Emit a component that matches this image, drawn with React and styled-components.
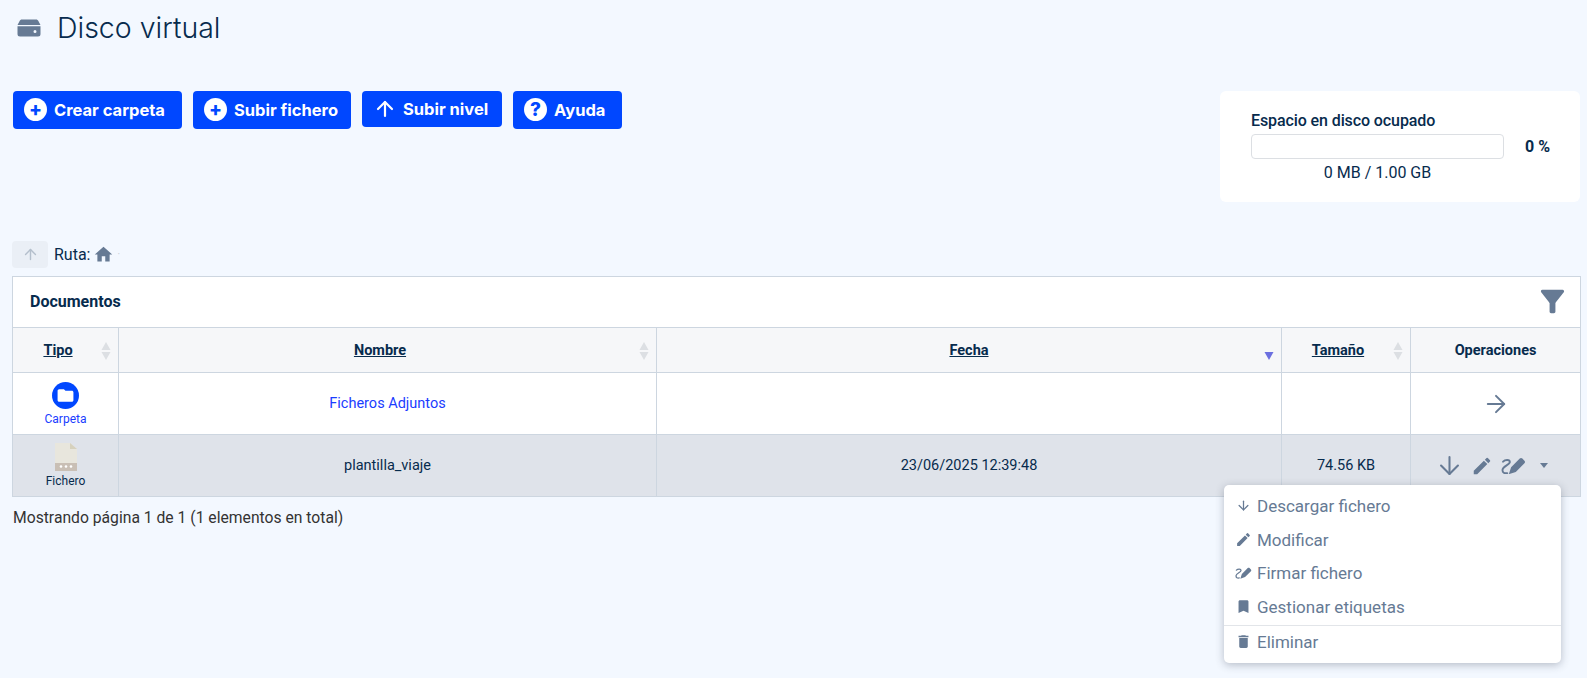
import React from 'react';
import styled, { createGlobalStyle } from 'styled-components';
import { ArrowUp, ArrowDown, ArrowRight } from 'lucide-react';
import { MdEdit, MdHome, MdBookmark, MdDelete, MdFolder, MdFilterAlt } from 'react-icons/md';

const palette = {
  bg: '#f3f8ff',
  blue: '#0047ff',
  ink: '#072b4d',
  grey: '#667a94',
  line: '#cdd6e0',
  selected: '#dfe3ea',
  head: '#f6f7f9',
};

const GlobalStyle = createGlobalStyle`
  html, body {
    margin: 0;
    padding: 0;
    background: ${palette.bg};
    font-family: Roboto, "Liberation Sans", sans-serif;
    color: ${palette.ink};
  }
  * { box-sizing: border-box; }
`;

const Page = styled.div`
  width: 1587px;
  height: 678px;
  padding: 0 7px 0 12px;
  overflow: hidden;
`;

const Header = styled.header`
  display: flex;
  align-items: center;
  height: 91px;
  padding: 0 0 36px 5px;
  gap: 16px;
`;

const Title = styled.h1`
  margin: 0;
  font-family: Inter, sans-serif;
  font-size: 28.5px;
  font-weight: 300;
  color: ${palette.ink};
`;

const TopRow = styled.div`
  display: flex;
  justify-content: space-between;
  align-items: flex-start;
`;

const Buttons = styled.div`
  display: flex;
  align-items: flex-start;
  gap: 11px;
  padding-left: 1px;
`;

const ActionBtn = styled.button`
  display: flex;
  align-items: center;
  gap: ${({ $gap }) => $gap || 7}px;
  width: ${({ $w }) => $w}px;
  height: ${({ $h }) => $h || 38}px;
  padding: 0 0 1px 11px;
  border: 0;
  border-radius: 4px;
  background: ${palette.blue};
  color: #fff;
  font-family: Inter, sans-serif;
  font-size: 16.5px;
  font-weight: 700;
`;

const BtnCircle = styled.span`
  display: flex;
  align-items: center;
  justify-content: center;
  width: 23px;
  height: 23px;
  border-radius: 50%;
  background: #fff;
  color: ${palette.blue};
  font-size: 19px;
  font-weight: 800;
  line-height: 1;
`;

const DiskCard = styled.div`
  width: 360px;
  height: 111px;
  padding: 18px 0 0 31px;
  background: #fff;
  border-radius: 6px;
`;

const DiskTitle = styled.div`
  font-size: 16px;
  font-weight: 500;
  line-height: 24px;
  letter-spacing: -0.1px;
`;

const DiskBarRow = styled.div`
  display: flex;
  align-items: center;
  gap: 21px;
  margin-top: 1px;
`;

const DiskBar = styled.div`
  width: 253px;
  height: 25px;
  border: 1px solid #dcdfe3;
  border-radius: 4px;
`;

const DiskPct = styled.span`
  font-size: 16px;
  font-weight: 700;
`;

const DiskInfo = styled.div`
  width: 253px;
  margin-top: 2px;
  text-align: center;
  font-size: 16px;
  line-height: 24px;
`;

const PathRow = styled.div`
  display: flex;
  align-items: center;
  height: 27px;
  margin-top: 39px;
  font-size: 16px;
`;

const BackBtn = styled.button`
  display: flex;
  align-items: center;
  justify-content: center;
  width: 36px;
  height: 27px;
  margin-right: 6px;
  border: 0;
  border-radius: 4px;
  background: #eaeff6;
  color: #b4bfcc;
`;

const HomeIcon = styled(MdHome)`
  margin-left: 2px;
  color: ${palette.grey};
  font-size: 21px;
`;

const PathDot = styled.span`
  margin-left: 4px;
  color: #c5ccd6;
  font-size: 10px;
`;

const TableWrap = styled.div`
  position: relative;
  margin-top: 8px;
`;

const Table = styled.table`
  width: 1568px;
  table-layout: fixed;
  border-collapse: collapse;
  font-size: 14.5px;
`;

const CaptionRow = styled.tr`
  height: 51px;
  background: #fff;
`;

const CaptionCell = styled.td`
  border: 1px solid ${palette.line};
  padding: 0 17px;
`;

const CaptionInner = styled.div`
  display: flex;
  align-items: center;
  justify-content: space-between;
  padding-bottom: 1px;
  font-size: 16px;
  font-weight: 700;
`;

const FilterIcon = styled(MdFilterAlt)`
  margin-right: -7px;
  color: ${palette.grey};
  font-size: 35px;
`;

const Th = styled.th`
  position: relative;
  height: 45px;
  padding: 0 ${({ $shift }) => $shift || 0}px 0 0;
  border: 1px solid ${palette.line};
  background: ${palette.head};
  font-size: 14.5px;
  font-weight: 700;
  text-align: center;
  text-decoration: ${({ $plain }) => ($plain ? 'none' : 'underline')};
`;

const SortIcon = styled.svg`
  position: absolute;
  top: 14px;
  right: 7px;
  width: 10px;
  height: 18px;
`;

const Row = styled.tr`
  height: ${({ $h }) => $h}px;
  background: ${({ $selected }) => ($selected ? palette.selected : '#fff')};
`;

const Td = styled.td`
  padding: 0;
  border: 1px solid ${palette.line};
  text-align: center;
  color: ${({ $link }) => ($link ? '#1a3dff' : palette.ink)};
`;

const TypeCell = styled.div`
  display: flex;
  flex-direction: column;
  align-items: center;
  gap: 3px;
  font-size: 12px;
  color: ${({ $link }) => ($link ? '#1a3dff' : palette.ink)};
`;

const FolderBadge = styled.span`
  display: flex;
  align-items: center;
  justify-content: center;
  width: 27px;
  height: 27px;
  border-radius: 50%;
  background: ${palette.blue};
  color: #fff;
  font-size: 19px;
`;

const RowActions = styled.div`
  display: flex;
  align-items: center;
  justify-content: center;
  gap: 7px;
  padding-right: ${({ $shift }) => $shift || 0}px;
  color: ${palette.grey};
`;

const SignSlot = styled.span`
  display: flex;
  margin-left: 1px;
`;

const Caret = styled.span`
  width: 0;
  height: 0;
  margin-left: 7px;
  border-left: 4.5px solid transparent;
  border-right: 4.5px solid transparent;
  border-top: 5px solid ${palette.grey};
`;

const Footer = styled.div`
  margin-top: 11px;
  padding-left: 1px;
  font-size: 15.7px;
  line-height: 20px;
  color: #333;
`;

const Menu = styled.div`
  position: absolute;
  top: 100%;
  right: 19px;
  width: 337px;
  height: 178px;
  margin-top: -12px;
  padding-top: 4px;
  background: #fff;
  border-radius: 5px;
  box-shadow: 0 2px 8px rgba(40, 50, 70, 0.3);
`;

const MenuItem = styled.div`
  display: flex;
  align-items: center;
  gap: 3px;
  height: ${({ $h }) => $h || 33.7}px;
  margin-top: ${({ $divided }) => ($divided ? 1 : 0)}px;
  padding-left: 8px;
  font-size: 17px;
  color: ${palette.grey};
  border-top: ${({ $divided }) => ($divided ? '1px solid #e2e5e9' : '0')};
`;

const MenuIconBox = styled.span`
  display: flex;
  align-items: center;
  justify-content: center;
  width: 22px;
`;

function DiskIcon() {
  return (
    <svg width="24" height="20" viewBox="0 0 24 20" fill={palette.grey}>
      <path d="M5 1.500h14c1.200 0 2 .7 2.500 1.700L23.500 7H.5l2-3.800C3 2.200 3.800 1.500 5 1.500z" />
      <path fillRule="evenodd" d="M.5 8.300h23V16a2.500 2.500 0 0 1-2.500 2.500H3A2.500 2.500 0 0 1 .5 16V8.300zm17.500 3.700a1.500 1.500 0 1 0 0 3 1.500 1.500 0 0 0 0-3z" />
    </svg>
  );
}

function SignIcon({ size = 25 }) {
  return (
    <svg width={size} height={(size * 17) / 24} viewBox="0 0 24 17" fill="none">
      <path d="M7.500 16.500 9.700 9.800 18 1.500c.7-.7 1.800-.7 2.500 0l2 2c.7.7.7 1.800 0 2.500L14.200 14.300z" fill={palette.grey} />
      <path d="M2 4.500C4 2.300 8.500 2.300 8.500 4.800S2 8.800 1.500 12s2 4 4.500 3.500" stroke={palette.grey} strokeWidth="1.800" strokeLinecap="round" />
    </svg>
  );
}

function FileIcon() {
  return (
    <svg width="22" height="28" viewBox="0 0 22 28">
      <path d="M0 0h15l7 6v22H0z" fill="#e8e6dd" />
      <path d="M15 0l7 6h-7z" fill="#d6d1bd" />
      <path d="M0 20h22v8H0z" fill="#c9bfb5" />
      <circle cx="6" cy="23.500" r="1.300" fill="#fff" />
      <circle cx="11" cy="23.500" r="1.300" fill="#fff" />
      <circle cx="16" cy="23.500" r="1.300" fill="#fff" />
    </svg>
  );
}

function SortArrows({ active }) {
  return (
    <SortIcon viewBox="0 0 10 18">
      <path d="M5 0l4.500 8h-9z" fill={active ? 'transparent' : '#dcdfe3'} />
      <path d="M5 18l4.500-8h-9z" fill={active ? '#6b6fe0' : '#dcdfe3'} />
    </SortIcon>
  );
}

const menuItems = [
  { label: 'Descargar fichero', icon: <ArrowDown size={15} /> },
  { label: 'Modificar', icon: <MdEdit size={17} /> },
  { label: 'Firmar fichero', icon: <SignIcon size={17} /> },
  { label: 'Gestionar etiquetas', icon: <MdBookmark size={17} /> },
];

function App() {
  return (
    <Page>
      <GlobalStyle />
      <Header>
        <DiskIcon />
        <Title>Disco virtual</Title>
      </Header>

      <TopRow>
        <Buttons>
          <ActionBtn $w={169}>
            <BtnCircle>+</BtnCircle>
            Crear carpeta
          </ActionBtn>
          <ActionBtn $w={158}>
            <BtnCircle>+</BtnCircle>
            Subir fichero
          </ActionBtn>
          <ActionBtn $w={140} $h={36} $gap={6}>
            <ArrowUp size={24} strokeWidth={2.2} />
            Subir nivel
          </ActionBtn>
          <ActionBtn $w={109}>
            <BtnCircle>?</BtnCircle>
            Ayuda
          </ActionBtn>
        </Buttons>
        <DiskCard>
          <DiskTitle>Espacio en disco ocupado</DiskTitle>
          <DiskBarRow>
            <DiskBar />
            <DiskPct>0 %</DiskPct>
          </DiskBarRow>
          <DiskInfo>0 MB / 1.00 GB</DiskInfo>
        </DiskCard>
      </TopRow>

      <PathRow>
        <BackBtn>
          <ArrowUp size={17} />
        </BackBtn>
        Ruta:
        <HomeIcon />
        <PathDot>·</PathDot>
      </PathRow>

      <TableWrap>
        <Table>
          <colgroup>
            <col width="106" />
            <col width="538" />
            <col width="625" />
            <col width="129" />
            <col width="170" />
          </colgroup>
          <tbody>
            <CaptionRow>
              <CaptionCell colSpan={5}>
                <CaptionInner>
                  Documentos
                  <FilterIcon />
                </CaptionInner>
              </CaptionCell>
            </CaptionRow>
            <tr>
              <Th $shift={15}>
                Tipo
                <SortArrows />
              </Th>
              <Th $shift={15}>
                Nombre
                <SortArrows />
              </Th>
              <Th>
                Fecha
                <SortArrows active />
              </Th>
              <Th $shift={16}>
                Tamaño
                <SortArrows />
              </Th>
              <Th $plain>Operaciones</Th>
            </tr>
            <Row $h={62}>
              <Td>
                <TypeCell $link>
                  <FolderBadge>
                    <MdFolder />
                  </FolderBadge>
                  Carpeta
                </TypeCell>
              </Td>
              <Td $link>Ficheros Adjuntos</Td>
              <Td />
              <Td />
              <Td>
                <RowActions>
                  <ArrowRight size={28} strokeWidth={1.7} />
                </RowActions>
              </Td>
            </Row>
            <Row $h={62} $selected>
              <Td>
                <TypeCell>
                  <FileIcon />
                  Fichero
                </TypeCell>
              </Td>
              <Td>plantilla_viaje</Td>
              <Td>23/06/2025 12:39:48</Td>
              <Td>74.56 KB</Td>
              <Td>
                <RowActions $shift={9}>
                  <ArrowDown size={29} strokeWidth={1.7} />
                  <MdEdit size={22} />
                  <SignSlot>
                    <SignIcon />
                  </SignSlot>
                  <Caret />
                </RowActions>
              </Td>
            </Row>
          </tbody>
        </Table>
        <Menu>
          {menuItems.map((item) => (
            <MenuItem key={item.label}>
              <MenuIconBox>{item.icon}</MenuIconBox>
              {item.label}
            </MenuItem>
          ))}
          <MenuItem $divided $h={33}>
            <MenuIconBox>
              <MdDelete size={17} />
            </MenuIconBox>
            Eliminar
          </MenuItem>
        </Menu>
      </TableWrap>

      <Footer>Mostrando página 1 de 1 (1 elementos en total)</Footer>
    </Page>
  );
}

export default App;
